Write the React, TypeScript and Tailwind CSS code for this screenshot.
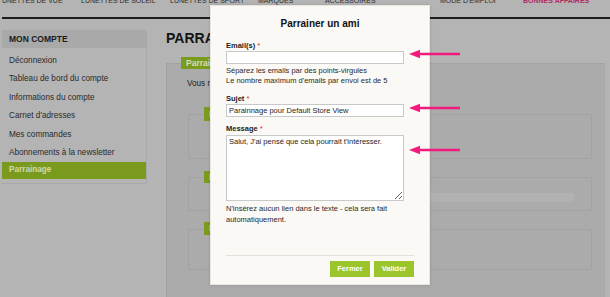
const navItems = [
	{ label: 'LUNETTES DE VUE', w: 'w-[83px]' },
	{ label: 'LUNETTES DE SOLEIL', w: 'w-[89px]' },
	{ label: 'LUNETTES DE SPORT', w: 'w-[88px]' },
	{ label: 'MARQUES', w: 'w-[67px]' },
	{ label: 'ACCESSOIRES', w: 'w-[115px]' },
	{ label: "MODE D'EMPLOI", w: 'w-[83px]' },
]

const menu = [
	'Déconnexion',
	'Tableau de bord du compte',
	'Informations du compte',
	"Carnet d'adresses",
	'Mes commandes',
	'Abonnements à la newsletter',
]

const Arrow = ({ top }: { top: string }) => (
	<svg
		className={`absolute z-30 left-[409px] ${top} w-[52px] h-[12px]`}
		viewBox="0 0 52 12"
	>
		<line x1="9" y1="6" x2="51" y2="6" stroke="#f2197f" strokeWidth="2.6" />
		<polygon points="0,6 11,1.8 11,10.2" fill="#f2197f" />
	</svg>
)

const Tab = ({ label, className }: { label: string; className: string }) => (
	<div
		className={`relative z-10 self-start bg-[#7b9b1f] text-[#d4ddb8] font-bold text-[8.5px] leading-[13px] px-[5px] ${className}`}
	>
		{label}
	</div>
)

const Label = ({ text, className }: { text: string; className: string }) => (
	<div className={`text-[7.5px] leading-[10px] font-bold text-[#222] ${className}`}>
		{text} <span className="text-[#d9302a] font-normal">*</span>
	</div>
)

const App = () => {
	return (
		<div className="relative w-[610px] h-[297px] overflow-hidden bg-[#b4b4b4] font-['Liberation_Sans',Arial,sans-serif]">
			{/* top menu, cut at the top */}
			<nav className="ml-[2px] h-[19px] border-b-2 border-[#1c1c1c] flex items-start overflow-hidden">
				<div className="flex -ml-[4px] -mt-[3px] text-[7px] leading-[8px] text-[#2c2c2c]">
					{navItems.map(i => (
						<span key={i.label} className={`${i.w} shrink-0`}>
							{i.label}
						</span>
					))}
					<span className="font-bold text-[#b12c66]">BONNES AFFAIRES</span>
				</div>
			</nav>

			<div className="flex pl-[2px] pt-[11px]">
				{/* account menu */}
				<aside className="w-[145px] shrink-0 self-start border-r border-b border-[#a9a9a9] pb-[4px]">
					<div className="h-[18px] bg-[#a9a9a9] pl-[7px] flex items-center text-[8.5px] font-bold text-[#1b1b1b]">
						MON COMPTE
					</div>
					<ul className="pt-[4px] text-[8.2px] text-[#2a2a2a]">
						{menu.map(m => (
							<li key={m} className="h-[18.4px] pl-[7px] flex items-center">
								{m}
							</li>
						))}
						<li className="h-[16.5px] pl-[7px] flex items-center bg-[#7a9a1e] text-[#cfdbad] font-bold">
							Parrainage
						</li>
					</ul>
				</aside>

				{/* page content */}
				<main className="ml-[19px] w-[439px] flex flex-col">
					<h1 className="text-[14px] leading-[16px] font-bold text-[#141414]">
						PARRAINAGE
					</h1>
					<Tab label="Parrainage" className="ml-[15px] mt-[11px] h-[12px] leading-[12px]" />
					<div className="-mt-[6px] h-[240px] border-t border-l border-[#a3a3a3] bg-[#ababab] pl-[21px] pr-[13px] flex flex-col">
						<p className="ml-[-1px] mt-[15px] text-[8.2px] leading-[10px] text-[#222]">
							Vous n'avez pas encore de filleuls.
						</p>

						<Tab label="Détails" className="ml-[16px] mt-[18px] h-[14px] leading-[14px]" />
						<div className="-mt-[7px] h-[45px] border border-[#a2a2a2] pt-[14px] pl-[22px]">
							<div className="w-[3px] h-[17px] bg-[#111]" />
						</div>

						<Tab label="Lien" className="ml-[16px] mt-[12px] h-[12px] leading-[12px]" />
						<div className="-mt-[6px] h-[34px] border border-[#a2a2a2] pt-[15px] pl-[21px] pr-[17px] flex items-start gap-[6px]">
							<span className="text-[8.2px] leading-[10px] text-[#222]">Lien</span>
							<div className="flex-1 h-[9px] bg-[#b1b1b1]" />
						</div>

						<Tab label="Partage" className="ml-[16px] mt-[11px] h-[13px]" />
						<div className="-mt-[6px] h-[41px] border border-[#a2a2a2]" />
					</div>
				</main>
			</div>

			{/* modal */}
			<div className="absolute z-20 left-[210px] top-[5px] w-[220px] h-[280px] bg-[#faf9f5] border border-[#e8e6df] shadow-[0_0_3px_rgba(0,0,0,0.15)] px-[15px] pt-[12px] flex flex-col">
				<h2 className="text-center text-[10px] leading-[12px] font-bold text-[#111]">
					Parrainer un ami
				</h2>

				<Label text="Email(s)" className="mt-[11px]" />
				<input
					readOnly
					value=""
					className="w-[178px] h-[13px] bg-white border border-[#c9c9c9] outline-none"
				/>
				<p className="mt-[2px] text-[7.5px] leading-[10px] text-[#2a2a2a]">
					Séparez les emails par des points-virgules
					<br />
					Le nombre maximum d'emails par envoi est de 5
				</p>

				<Label text="Sujet" className="mt-[8px]" />
				<input
					readOnly
					value="Parainnage pour Default Store View"
					className="w-[178px] h-[13px] bg-white border border-[#c9c9c9] outline-none px-[2px] text-[7.5px] text-[#1e1e1e] font-['Liberation_Sans',Arial,sans-serif]"
				/>

				<Label text="Message" className="mt-[7px]" />
				<textarea
					readOnly
					defaultValue="Salut, J'ai pensé que cela pourrait t'intéresser."
					className="mt-[1px] w-[178px] h-[66px] bg-white border border-[#c9c9c9] outline-none px-[2px] py-[1px] text-[7.5px] leading-[10px] text-[#1e1e1e] font-['Liberation_Sans',Arial,sans-serif]"
				/>
				<p className="mt-[2px] text-[7.5px] leading-[11px] text-[#2a2a2a]">
					N'insérez aucun lien dans le texte - cela sera fait
					<br />
					automatiquement.
				</p>

				<div className="mt-[30px] border-t border-[#e2e0d9]" />
				<div className="mt-[5px] flex justify-end gap-[4px]">
					<button className="w-[40px] h-[16px] bg-[#9bc52a] text-white text-[7.5px] font-bold">
						Fermer
					</button>
					<button className="w-[40px] h-[16px] bg-[#9bc52a] text-white text-[7.5px] font-bold">
						Valider
					</button>
				</div>
			</div>

			<Arrow top="top-[48px]" />
			<Arrow top="top-[102px]" />
			<Arrow top="top-[144px]" />
		</div>
	)
}

export default App
